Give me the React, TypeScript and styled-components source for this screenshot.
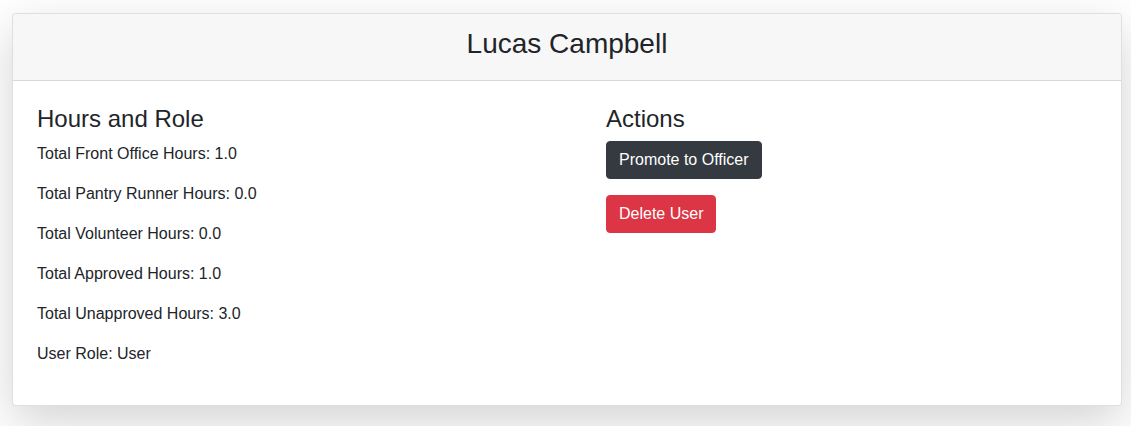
import styled, { createGlobalStyle } from "styled-components";

const GlobalStyle = createGlobalStyle`
  body {
    margin: 0;
    background: #ffffff;
    font-family: "Liberation Sans", Arial, sans-serif;
    color: #212529;
  }
  * {
    box-sizing: border-box;
  }
`;

const Page = styled.div`
  padding: 13px 0 40px 12px;
`;

const Card = styled.div`
  width: 1110px;
  background: #fff;
  border: 1px solid rgba(0, 0, 0, 0.125);
  border-radius: 4px;
  box-shadow: 0 16px 48px rgba(0, 0, 0, 0.175);
  overflow: hidden;
`;

const CardHeader = styled.div`
  background: #f7f7f7;
  border-bottom: 1px solid rgba(0, 0, 0, 0.125);
  padding: 13px 20px 12px;
  text-align: center;
`;

const Name = styled.h3`
  margin: 0 0 7px;
  font-size: 28px;
  font-weight: 500;
  line-height: 1.2;
`;

const CardBody = styled.div`
  display: grid;
  grid-template-columns: 569px 1fr;
  padding: 24px 24px 23px;
`;

const Column = styled.div`
  display: flex;
  flex-direction: column;
  align-items: flex-start;
`;

const SectionTitle = styled.h4<{ $gap: number }>`
  margin: 0 0 ${(p) => p.$gap}px;
  font-size: 24px;
  font-weight: 500;
  line-height: 1.2;
`;

const Stat = styled.p`
  margin: 0 0 16px;
  font-size: 16px;
  line-height: 24px;
`;

const Button = styled.button<{ $variant: "dark" | "danger" }>`
  font-family: inherit;
  font-size: 16px;
  line-height: 24px;
  padding: 6px 12px;
  border-radius: 4px;
  border: 1px solid ${(p) => (p.$variant === "dark" ? "#343a40" : "#dc3545")};
  background: ${(p) => (p.$variant === "dark" ? "#343a40" : "#dc3545")};
  color: #fff;
  margin-bottom: 16px;
  cursor: pointer;
`;

const stats = [
  "Total Front Office Hours: 1.0",
  "Total Pantry Runner Hours: 0.0",
  "Total Volunteer Hours: 0.0",
  "Total Approved Hours: 1.0",
  "Total Unapproved Hours: 3.0",
  "User Role: User",
];

export default function App() {
  return (
    <>
      <GlobalStyle />
      <Page>
        <Card>
          <CardHeader>
            <Name>Lucas Campbell</Name>
          </CardHeader>
          <CardBody>
            <Column>
              <SectionTitle $gap={9}>Hours and Role</SectionTitle>
              {stats.map((s) => (
                <Stat key={s}>{s}</Stat>
              ))}
            </Column>
            <Column>
              <SectionTitle $gap={8}>Actions</SectionTitle>
              <Button $variant="dark">Promote to Officer</Button>
              <Button $variant="danger">Delete User</Button>
            </Column>
          </CardBody>
        </Card>
      </Page>
    </>
  );
}
